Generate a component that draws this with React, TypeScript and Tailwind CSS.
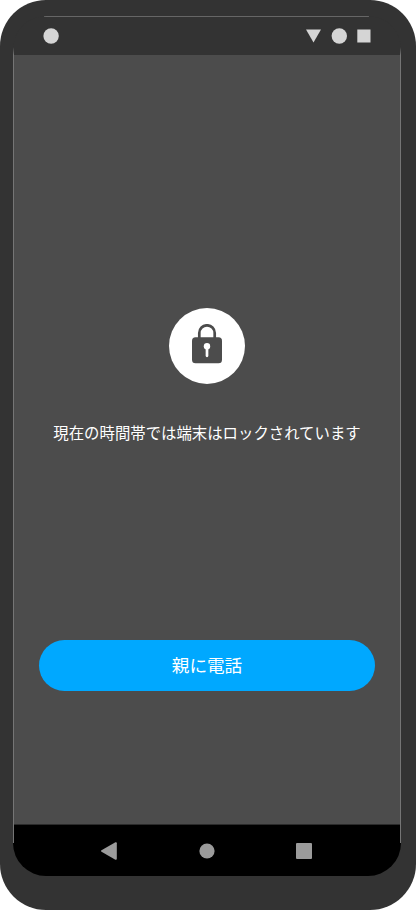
function ScreenEdges() {
  return (
    <>
      <span className="absolute left-[31px] right-[32px] top-0 h-px bg-[#666]" />
      <span className="absolute bottom-[33px] left-0 top-[31px] w-px bg-linear-to-b from-transparent via-[#757575] via-1% to-[#757575]" />
      <span className="absolute bottom-[33px] right-0 top-[31px] w-px bg-linear-to-b from-transparent via-[#757575] via-1% to-[#757575]" />
    </>
  );
}

function StatusBar() {
  return (
    <header className="flex h-[39px] shrink-0 items-center justify-between bg-[#333] px-[30px]">
      <svg className="size-4" viewBox="0 0 16 16" fill="#d5d5d5">
        <circle cx="8.1" cy="8" r="7.7" />
      </svg>
      <svg className="h-4 w-[66px]" viewBox="0 0 66 16" fill="#d5d5d5">
        <path d="M1 1.5h15L8.5 14.5z" />
        <circle cx="34.3" cy="8" r="7.7" />
        <path d="M52.3 1.4h13.2v13.2H52.3z" />
      </svg>
    </header>
  );
}

function LockBadge() {
  return (
    <div className="mt-[253px] flex size-[76px] shrink-0 justify-center rounded-full bg-white pt-[16px]">
      <svg className="h-[40px] w-[30px]" viewBox="0 0 30 40" fill="none">
        <path d="M7.3 15V9a7.7 7.7 0 0 1 15.4 0V15" stroke="#4c4c4c" strokeWidth="2.7" />
        <rect y="13.3" width="30" height="26" rx="3.5" fill="#4c4c4c" />
        <circle cx="15" cy="22.2" r="3.2" fill="#fff" />
        <path d="M15 23v8.8" stroke="#fff" strokeWidth="2.7" strokeLinecap="round" />
      </svg>
    </div>
  );
}

function NavBar() {
  return (
    <nav className="flex h-[52px] shrink-0 items-center border-t border-[#2b2b2b] bg-black pl-[88px]">
      <svg className="h-[18px] w-[16px]" viewBox="0 0 16 18" fill="#9b9b9b">
        <path d="M.5 8.3 14.4.3Q15.8-.2 15.8 1.2v15.6q0 1.4-1.4.9L.5 9.7q-1-.7 0-1.4z" />
      </svg>
      <svg className="ml-[82px] size-4" viewBox="0 0 16 16" fill="#9b9b9b">
        <circle cx="8" cy="8" r="7.6" />
      </svg>
      <span className="ml-[81px] size-[16px] rounded-[1px] bg-[#9b9b9b]" />
    </nav>
  );
}

export default function App() {
  return (
    <div className="h-[911px] w-[416px] overflow-hidden bg-white font-['Noto_Sans_CJK_JP',sans-serif]">
      <div className="h-[910px] rounded-[46px] bg-[#333] px-[13px] pt-[16px] pr-[15px]">
        <div className="relative flex h-[860px] flex-col overflow-hidden rounded-[33px]">
          <StatusBar />
          <main className="flex flex-1 flex-col items-center bg-[#4c4c4c] text-white">
            <LockBadge />
            <p className="mt-[36px] whitespace-nowrap text-[15.4px] leading-6">
              現在の時間帯では端末はロックされています
            </p>
            <button className="mt-[196px] h-[51px] w-[336px] rounded-full bg-[#00a8ff] pb-[2px] text-[17.6px] leading-6">
              親に電話
            </button>
          </main>
          <NavBar />
          <ScreenEdges />
        </div>
      </div>
    </div>
  );
}
